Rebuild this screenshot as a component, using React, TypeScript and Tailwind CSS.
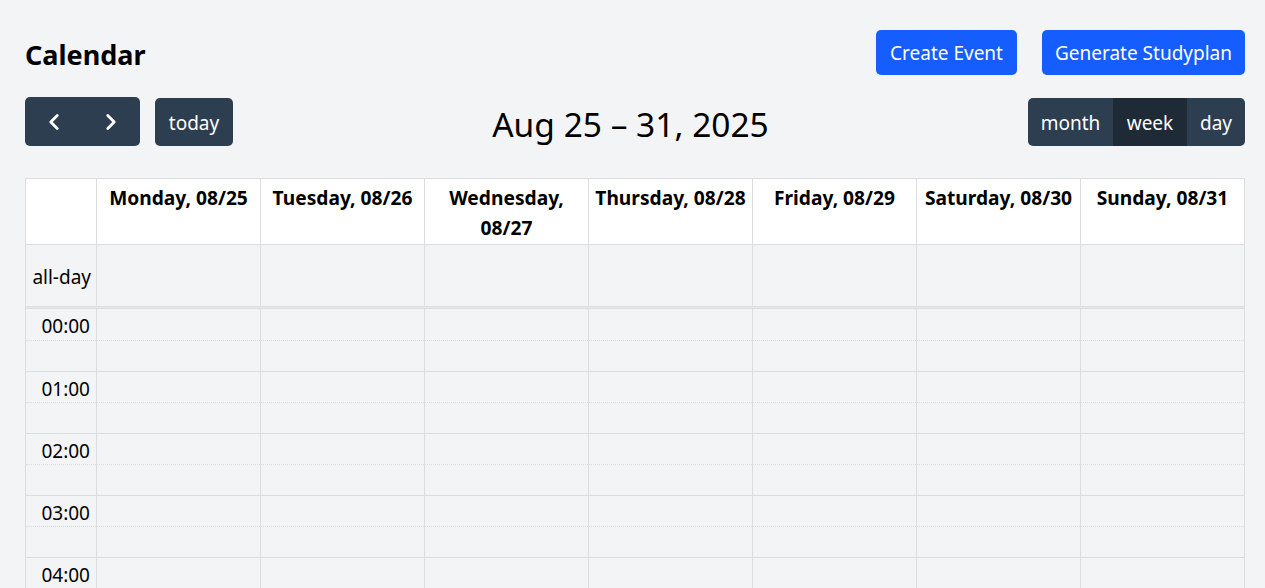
import { ChevronLeft, ChevronRight } from "lucide-react";

const days = [
  "Monday, 08/25",
  "Tuesday, 08/26",
  "Wednesday, 08/27",
  "Thursday, 08/28",
  "Friday, 08/29",
  "Saturday, 08/30",
  "Sunday, 08/31",
];

const hours = Array.from({ length: 24 }, (_, i) => `${String(i).padStart(2, "0")}:00`);

const cols = "grid grid-cols-[70px_repeat(7,1fr)]";

const Toolbar = () => (
  <div className="flex items-center justify-between h-[49px] mb-[32px]">
    <div className="flex items-center gap-[15px]">
      <div className="flex rounded-[5px] overflow-hidden bg-[#2c3e50] text-white">
        <button className="w-[57px] h-[49px] flex items-center justify-center">
          <ChevronLeft size={26} strokeWidth={2.6} />
        </button>
        <button className="w-[58px] h-[49px] flex items-center justify-center">
          <ChevronRight size={26} strokeWidth={2.6} />
        </button>
      </div>
      <button className="w-[78px] h-[48px] pt-[3px] rounded-[5px] bg-[#2c3e50] text-white text-[19px]">today</button>
    </div>
    <h2 className="text-[33.5px] leading-[44px] pt-[5px] text-black">Aug 25 – 31, 2025</h2>
    <div className="flex rounded-[5px] overflow-hidden text-white text-[19px] h-[48px]">
      <button className="w-[85px] pt-[3px] bg-[#2c3e50]">month</button>
      <button className="w-[74px] pt-[3px] bg-[#1e2b37]">week</button>
      <button className="w-[58px] pt-[3px] bg-[#2c3e50]">day</button>
    </div>
  </div>
);

const WeekGrid = () => (
  <div className="border border-[#ddd] text-[19px] leading-[30px] text-black">
    {/* header */}
    <div className={`${cols} bg-white border-b border-[#ddd]`}>
      <div />
      {days.map((d) => (
        <div key={d} className="border-l border-[#ddd] px-[4px] pt-[4px] pb-[1px] text-center font-bold text-[19.2px]">
          {d}
        </div>
      ))}
    </div>

    {/* all-day */}
    <div className={`${cols} h-[61px]`}>
      <div className="flex items-center justify-end pr-[5px] pt-[2px]">all-day</div>
      {days.map((d) => (
        <div key={d} className="border-l border-[#ddd]" />
      ))}
    </div>

    {/* divider */}
    <div className="h-[3px] bg-[#e8e9eb] border-t border-b border-[#ddd]" />

    {/* slots */}
    {hours.map((h, i) => (
      <div key={h}>
        <div className={`${cols} h-[31px] ${i === 0 ? "" : "border-t border-[#ddd]"}`}>
          <div className="text-right pr-[6px] pt-[2px]">{h}</div>
          {days.map((d) => (
            <div key={d} className="border-l border-[#ddd]" />
          ))}
        </div>
        <div className={`${cols} h-[31px] border-t border-dotted border-[#ddd]`}>
          <div />
          {days.map((d) => (
            <div key={d} className="border-l border-solid border-[#ddd]" />
          ))}
        </div>
      </div>
    ))}
  </div>
);

export default function App() {
  return (
    <div className="min-h-screen bg-[#f3f4f6] pl-[25px] pr-[20px] pt-[30px] font-['Noto_Sans',sans-serif]">
      <div className="flex items-center justify-between h-[45px] mb-[22px]">
        <h1 className="text-[27px] leading-none font-bold text-black pt-[4px]">Calendar</h1>
        <div className="flex gap-[25px]">
          <button className="h-[45px] w-[141px] pt-[2px] rounded-[5px] bg-[#155dfc] text-white text-[19px]">Create Event</button>
          <button className="h-[45px] w-[203px] pt-[2px] rounded-[5px] bg-[#155dfc] text-white text-[19px]">Generate Studyplan</button>
        </div>
      </div>
      <Toolbar />
      <WeekGrid />
    </div>
  );
}
